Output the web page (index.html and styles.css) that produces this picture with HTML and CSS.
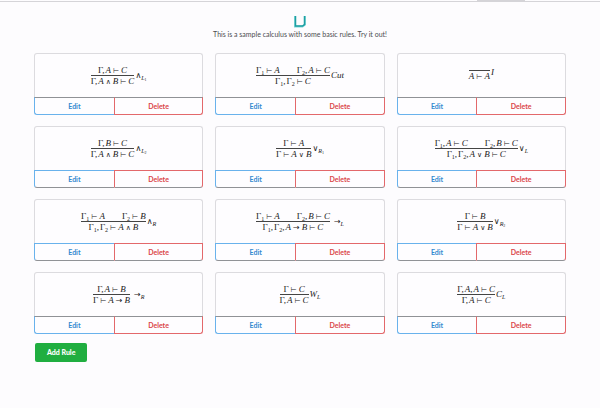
FILE: index.html
```html
<!DOCTYPE html>
<html lang="en">
<head>
<meta charset="utf-8">
<title>Sample calculus</title>
<link rel="stylesheet" href="styles.css">
</head>
<body>
<div class="topbar"><div class="topbar-tab"></div></div>
<header class="intro">
  <svg class="logo" viewBox="0 0 12 12" aria-hidden="true"><path class="logo-glow" d="M1 0V10.500H8.500L11 8.500V0"/><path class="logo-line" d="M1.500 0V10H8.500L10.500 8.500V0"/></svg>
  <p class="tagline">This is a sample calculus with some basic rules. Try it out!</p>
</header>
<main class="content">
  <div class="rules">
    <article class="card dark-top">
      <div class="rule"><div class="frac"><div class="top"><span>Γ<b>,</b><i>A</i><u>⊢</u><i>C</i></span></div><div class="bottom">Γ<b>,</b><i>A</i><u>∧</u><i>B</i><u>⊢</u><i>C</i></div></div><div class="label"><s>∧</s><sub><i>L</i><small>1</small></sub></div></div>
      <div class="actions"><button class="edit">Edit</button><button class="delete">Delete</button></div>
    </article>
    <article class="card dark-top">
      <div class="rule"><div class="frac"><div class="top"><span>Γ<sub>1</sub><u>⊢</u><i>A</i></span><span>Γ<sub>2</sub><b>,</b><i>A</i><u>⊢</u><i>C</i></span></div><div class="bottom">Γ<sub>1</sub><b>,</b>Γ<sub>2</sub><u>⊢</u><i>C</i></div></div><div class="label"><i>Cut</i></div></div>
      <div class="actions"><button class="edit">Edit</button><button class="delete">Delete</button></div>
    </article>
    <article class="card dark-top">
      <div class="rule"><div class="frac"><div class="top"></div><div class="bottom"><i>A</i><u>⊢</u><i>A</i></div></div><div class="label axiom"><i>I</i></div></div>
      <div class="actions"><button class="edit">Edit</button><button class="delete">Delete</button></div>
    </article>
    <article class="card dark-bottom">
      <div class="rule"><div class="frac"><div class="top"><span>Γ<b>,</b><i>B</i><u>⊢</u><i>C</i></span></div><div class="bottom">Γ<b>,</b><i>A</i><u>∧</u><i>B</i><u>⊢</u><i>C</i></div></div><div class="label"><s>∧</s><sub><i>L</i><small>2</small></sub></div></div>
      <div class="actions"><button class="edit">Edit</button><button class="delete">Delete</button></div>
    </article>
    <article class="card dark-bottom">
      <div class="rule"><div class="frac"><div class="top"><span>Γ<u>⊢</u><i>A</i></span></div><div class="bottom">Γ<u>⊢</u><i>A</i><u>∨</u><i>B</i></div></div><div class="label"><s>∨</s><sub><i>R</i><small>1</small></sub></div></div>
      <div class="actions"><button class="edit">Edit</button><button class="delete">Delete</button></div>
    </article>
    <article class="card dark-bottom">
      <div class="rule"><div class="frac"><div class="top"><span>Γ<sub>1</sub><b>,</b><i>A</i><u>⊢</u><i>C</i></span><span>Γ<sub>2</sub><b>,</b><i>B</i><u>⊢</u><i>C</i></span></div><div class="bottom">Γ<sub>1</sub><b>,</b>Γ<sub>2</sub><b>,</b><i>A</i><u>∨</u><i>B</i><u>⊢</u><i>C</i></div></div><div class="label"><s>∨</s><sub><i>L</i></sub></div></div>
      <div class="actions"><button class="edit">Edit</button><button class="delete">Delete</button></div>
    </article>
    <article class="card dark-bottom">
      <div class="rule"><div class="frac"><div class="top"><span>Γ<sub>1</sub><u>⊢</u><i>A</i></span><span>Γ<sub>2</sub><u>⊢</u><i>B</i></span></div><div class="bottom">Γ<sub>1</sub><b>,</b>Γ<sub>2</sub><u>⊢</u><i>A</i><u>∧</u><i>B</i></div></div><div class="label"><s>∧</s><sub><i>R</i></sub></div></div>
      <div class="actions"><button class="edit">Edit</button><button class="delete">Delete</button></div>
    </article>
    <article class="card dark-bottom">
      <div class="rule"><div class="frac"><div class="top"><span>Γ<sub>1</sub><u>⊢</u><i>A</i></span><span>Γ<sub>2</sub><b>,</b><i>B</i><u>⊢</u><i>C</i></span></div><div class="bottom">Γ<sub>1</sub><b>,</b>Γ<sub>2</sub><b>,</b><i>A</i><u class="arrow">→</u><i>B</i><u>⊢</u><i>C</i></div></div><div class="label spaced"><s class="arrow">→</s><sub><i>L</i></sub></div></div>
      <div class="actions"><button class="edit">Edit</button><button class="delete">Delete</button></div>
    </article>
    <article class="card dark-bottom">
      <div class="rule"><div class="frac"><div class="top"><span>Γ<u>⊢</u><i>B</i></span></div><div class="bottom">Γ<u>⊢</u><i>A</i><u>∨</u><i>B</i></div></div><div class="label"><s>∨</s><sub><i>R</i><small>2</small></sub></div></div>
      <div class="actions"><button class="edit">Edit</button><button class="delete">Delete</button></div>
    </article>
    <article class="card dark-top">
      <div class="rule"><div class="frac"><div class="top"><span>Γ<b>,</b><i>A</i><u>⊢</u><i>B</i></span></div><div class="bottom">Γ<u>⊢</u><i>A</i><u class="arrow">→</u><i>B</i></div></div><div class="label spaced"><s class="arrow">→</s><sub><i>R</i></sub></div></div>
      <div class="actions"><button class="edit">Edit</button><button class="delete">Delete</button></div>
    </article>
    <article class="card dark-top">
      <div class="rule"><div class="frac"><div class="top"><span>Γ<u>⊢</u><i>C</i></span></div><div class="bottom">Γ<b>,</b><i>A</i><u>⊢</u><i>C</i></div></div><div class="label"><i>W</i><sub><i>L</i></sub></div></div>
      <div class="actions"><button class="edit">Edit</button><button class="delete">Delete</button></div>
    </article>
    <article class="card dark-top">
      <div class="rule"><div class="frac"><div class="top"><span>Γ<b>,</b><i>A</i><b>,</b><i>A</i><u>⊢</u><i>C</i></span></div><div class="bottom">Γ<b>,</b><i>A</i><u>⊢</u><i>C</i></div></div><div class="label"><i>C</i><sub><i>L</i></sub></div></div>
      <div class="actions"><button class="edit">Edit</button><button class="delete">Delete</button></div>
    </article>
  </div>
  <button class="add">Add Rule</button>
</main>
</body>
</html>
```
FILE: styles.css
```css
* { box-sizing: border-box; }
body {
  margin: 0;
  background: #fdfcfe;
  font-family: Lato, "Liberation Sans", sans-serif;
  color: #4c4c50;
}
.topbar { height: 2px; border-bottom: 1px solid #d5d4d8; }
.topbar-tab { width: 8%; height: 2px; margin-left: 79.5%; background: #d5d4d8; }
.intro {
  display: flex;
  flex-direction: column;
  align-items: center;
  padding-top: 14px;
}
.logo { display: block; width: 12px; height: 12px; fill: none; }
.logo-glow { stroke: #7fd8d8; stroke-width: 2; }
.logo-line { stroke: #1f9ea2; stroke-width: 1.5; }
.tagline { margin: 1px 0 0; font-size: 7px; line-height: 11px; }
.content { padding: 13px 34px 0; }
.rules {
  display: grid;
  grid-template-columns: repeat(3, 1fr);
  gap: 11px 12px;
}
.card {
  display: flex;
  flex-direction: column;
  min-height: 62px;
  border-radius: 3px;
  background: #fefdff;
}
.rule {
  flex: 1;
  display: flex;
  align-items: center;
  justify-content: center;
  border: 1px solid #dcdbdf;
  border-bottom: 0;
  border-radius: 3px 3px 0 0;
  font-family: "Liberation Serif", "DejaVu Serif", serif;
  font-size: 9px;
  line-height: 10px;
  color: #222;
  white-space: nowrap;
}
.frac { text-align: center; }
.top {
  display: flex;
  justify-content: center;
  gap: 17px;
  border-bottom: 1px solid #444;
}
.top:not(:empty) { min-height: 10px; }
.rule sub { font-size: 6px; line-height: 0; vertical-align: -2px; }
.rule small { font-size: 4px; vertical-align: -1px; }
.rule b { font-weight: normal; margin-right: 1px; }
.rule u, .rule s {
  display: inline-block;
  text-decoration: none;
  font-family: "DejaVu Sans", sans-serif;
  font-size: 7px;
  line-height: 8px;
}
.rule u { margin: 0 2px; }
.rule .arrow { font-size: 8px; }
.label { margin-left: 1px; padding-bottom: 1px; }
.rule .label s { font-size: 8px; }
.spaced { margin-left: 4px; }
.axiom { padding-bottom: 8px; }
.actions { display: flex; height: 18px; }
.actions button {
  padding: 0;
  border: 1px solid;
  background: none;
  font: bold 7px/10px Lato, "Liberation Sans", sans-serif;
}
.actions .edit {
  flex: 80;
  border-color: #69b2ec;
  border-right: 0;
  border-radius: 0 0 0 3px;
  color: #3389cf;
}
.actions .delete {
  flex: 89;
  border-color: #e3686b;
  border-radius: 0 0 3px 0;
  color: #da4548;
}
.dark-top .actions button { border-top-color: #909296; }
.dark-bottom .actions button { border-bottom-color: #909296; }
.add {
  display: block;
  margin: 9px 0 0 1px;
  padding: 5px 12px;
  border: 0;
  border-radius: 2px;
  background: #20ae40;
  color: #fff;
  font: 900 7px/9px Lato, "Liberation Sans", sans-serif;
}
```
